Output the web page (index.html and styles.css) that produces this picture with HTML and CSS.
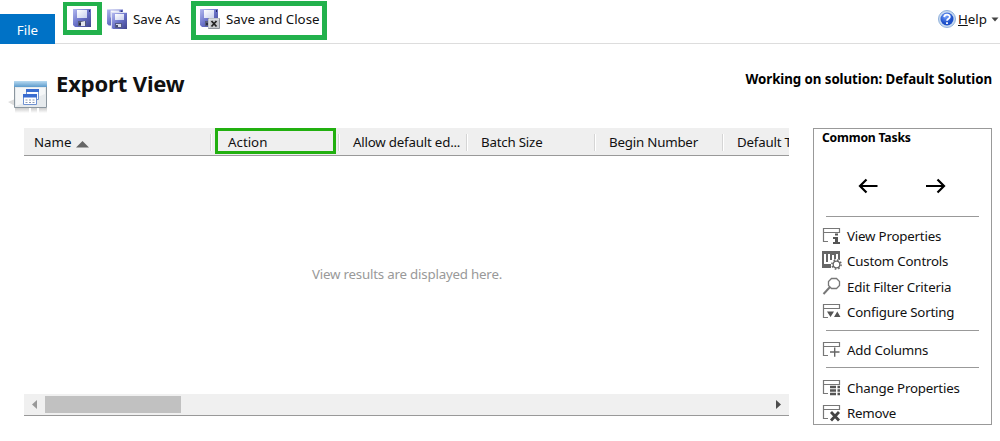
FILE: index.html
```html
<!DOCTYPE html>
<html lang="en">
<head>
<meta charset="utf-8">
<title>Export View</title>
<link rel="stylesheet" href="styles.css">
</head>
<body>
<svg class="defs" width="0" height="0">
  <defs>
    <linearGradient id="disk" x1="0" y1="0" x2="1" y2="1"><stop offset="0" stop-color="#b4baf0"/><stop offset=".5" stop-color="#6a72c8"/><stop offset="1" stop-color="#40448e"/></linearGradient>
    <linearGradient id="label" x1="0" y1="0" x2="1" y2="1"><stop offset="0" stop-color="#fff"/><stop offset="1" stop-color="#c9d0ee"/></linearGradient>
    <linearGradient id="bar" x1="0" y1="0" x2="0" y2="1"><stop offset="0" stop-color="#b9daf1"/><stop offset="1" stop-color="#5d9bcc"/></linearGradient>
    <radialGradient id="ball" cx=".4" cy=".3"><stop offset="0" stop-color="#78a5ff"/><stop offset="1" stop-color="#1d4fc9"/></radialGradient>
    <linearGradient id="fade" x1="0" y1="0" x2="0" y2="1"><stop offset="0" stop-color="#aaa"/><stop offset="1" stop-color="#fff"/></linearGradient>
    <symbol id="floppy" viewBox="0 0 18 18"><path d="M0 0H18V18H2L0 16Z" fill="url(#disk)"/><path d="M4 1H14V9H4Z" fill="url(#label)"/><path d="M5 12H13V17H5Z" fill="#555b78"/><path d="M8 13L12 12V17H8Z" fill="#e3e5ee"/><path d="M6 14H8V16H6Z" fill="#2b2e45"/><path d="M16 1H17V3H16Z" fill="#242967"/></symbol>
    <symbol id="pane" viewBox="0 0 20 20"><path d="M1.500 2.500H17.500V6.500H1.500ZM1.500 6.500V15.500H6" fill="none" stroke="#777" stroke-width="1.200"/></symbol>
  </defs>
</svg>
<header class="ribbon">
  <div class="file-tab"><span>File</span></div>
  <div class="tools">
    <div class="save marked"><svg width="18" height="18"><use href="#floppy"/></svg></div>
    <div class="save-as">
      <svg width="20" height="20" viewBox="0 0 20 20"><use href="#floppy" width="16" height="17"/><path d="M4 3H20V20H4Z" fill="#dfe2f5"/><path d="M5 4H20V20H6L5 19Z" fill="url(#disk)"/><path d="M8 5H17V11H8Z" fill="url(#label)"/><path d="M8 14H15V19H8Z" fill="#555b86"/><path d="M9 15H14V18H9Z" fill="#d9dcec"/><path d="M9 16H11V18H9Z" fill="#444a75"/></svg>
      <span>Save As</span>
    </div>
    <div class="save-close marked">
      <svg width="20" height="20" viewBox="0 0 20 20"><use href="#floppy" width="18" height="18"/><path d="M8.500 9.500H19.500V19.500H8.500Z" fill="#c5c8cd" stroke="#8e939b"/><path d="M9 19V10H19" fill="none" stroke="#eceef0"/><path d="M11.500 12L16.500 17.500M16.500 12L11.500 17.500" stroke="#222" stroke-width="1.800"/></svg>
      <span>Save and Close</span>
    </div>
  </div>
  <div class="help">
    <svg width="18" height="18" viewBox="0 0 18 18"><circle cx="9" cy="9" r="8.500" fill="#c8daf0" stroke="#8fb0dc"/><circle cx="9" cy="9" r="6.500" fill="url(#ball)"/><path d="M6.200 7.100C6.300 3.700 11.900 3.900 11.800 7C11.700 8.800 9 8.800 9 10.800M9 12.200V14" fill="none" stroke="#fff" stroke-width="1.800"/></svg>
    <span class="t-help"><u>H</u>elp</span>
    <svg class="caret" width="8" height="5" viewBox="0 0 8 5"><path d="M.5 .5H7.500L4 4.500Z" fill="#444"/></svg>
  </div>
</header>
<section class="title-row">
  <svg class="view-icon" width="40" height="36" viewBox="0 0 40 36">
    <path d="M0 22L7 19V26Z" fill="#ddd"/><path d="M7 28H39V33H7Z" fill="url(#fade)" opacity=".6"/>
    <path d="M6.500 2.500H38.500V27.500H6.500Z" fill="#e6eaed" stroke="#8b969f"/><path d="M6 1H39V7H6Z" fill="url(#bar)"/><path d="M8 8H37V14L8 26Z" fill="#fff" opacity=".6"/>
    <path d="M18.500 9.500H30.500V19.500H18.500Z" fill="#f9faff" stroke="#6e91d1"/><path d="M18 9H31V12H18Z" fill="#386bd0"/>
    <path d="M15.500 14.500H28.500V24.500H15.500Z" fill="#fff" stroke="#6e91d1"/><path d="M15 14H29V17.500H15Z" fill="#386bd0"/><path d="M17.500 20H26.500M17.500 22.500H26.500" stroke="#8b99b4" stroke-dasharray="2 1.500"/><path d="M22 28V33M30 28V33" stroke="#fff" stroke-width="2"/>
  </svg>
  <h1><span>Export View</span></h1>
  <div class="solution"><span>Working on solution: Default Solution</span></div>
</section>
<main class="content">
  <section class="grid">
    <div class="grid-head">
      <div class="col name"><span>Name</span><svg width="13" height="7" viewBox="0 0 13 7"><path d="M0 6.500L6.500 0L13 6.500Z" fill="#666"/></svg></div>
      <div class="col action"><div><span>Action</span></div></div>
      <div class="col tight"><span>Allow default ed...</span></div>
      <div class="col tight"><span>Batch Size</span></div>
      <div class="col tight"><span>Begin Number</span></div>
      <div class="col tight last"><span>Default T</span></div>
    </div>
    <div class="empty tight"><span>View results are displayed here.</span></div>
    <div class="scrollbar">
      <svg width="5" height="9" viewBox="0 0 5 9"><path d="M5 0V9L0 4.500Z" fill="#999"/></svg>
      <div class="thumb"></div>
      <svg width="5" height="9" viewBox="0 0 5 9"><path d="M0 0V9L5 4.500Z" fill="#4d4d4d"/></svg>
    </div>
  </section>
  <aside class="tasks tight">
    <h2><span>Common Tasks</span></h2>
    <div class="arrows">
      <svg width="22" height="16" viewBox="0 0 22 16"><path d="M20.500 8H3M9.500 1.500L3 8L9.500 14.500" fill="none" stroke="#000" stroke-width="2.200"/></svg>
      <svg width="22" height="16" viewBox="0 0 22 16"><path d="M1 8H19M12.500 1.500L19 8L12.500 14.500" fill="none" stroke="#000" stroke-width="2.200"/></svg>
    </div>
    <ul class="group first">
      <li><svg width="20" height="20"><use href="#pane"/><path d="M9 10H12V7H17V19H9Z" fill="#fff"/><path d="M13 7.500H16V9.500H13ZM11 11H16V16H18V18H11V16H13V13H11Z" fill="#555"/></svg><span>View Properties</span></li>
      <li><svg width="20" height="20"><path d="M0 0H18V9H16V3H14V9H12V4H10V9H8V3H6V11H4V3H2V15H9V17H0Z" fill="#666"/><path d="M0 13H9V17H0Z" fill="#666"/><circle cx="14.500" cy="13.500" r="5.500" fill="#fff"/><circle cx="14.500" cy="13.500" r="3.300" fill="#fff" stroke="#666" stroke-width="1.300"/><circle cx="14.500" cy="13.500" r="4.600" fill="none" stroke="#666" stroke-width="1.500" stroke-dasharray="1.600 2.013"/></svg><span>Custom Controls</span></li>
      <li><svg width="20" height="20"><path d="M9.500 1.500H14.500L17.500 4.500V8.500L14.500 11.500H9.500L6.500 8.500V4.500Z" fill="none" stroke="#777" stroke-width="1.300"/><path d="M8 10L1.500 17" stroke="#777" stroke-width="2"/></svg><span>Edit Filter Criteria</span></li>
      <li><svg width="20" height="20"><use href="#pane"/><path d="M5 9.500H12L8.500 15ZM12 15H18.500L15.300 9.500Z" fill="#555"/></svg><span>Configure Sorting</span></li>
    </ul>
    <ul class="group add">
      <li><svg width="20" height="20"><use href="#pane"/><path d="M7.500 12H18.500M12.500 7.500V17" stroke="#fff" stroke-width="3"/><path d="M8 12H17.500M12.700 7.500V16.700" stroke="#666" stroke-width="1.400"/></svg><span>Add Columns</span></li>
    </ul>
    <ul class="group change">
      <li><svg width="20" height="20"><use href="#pane"/><path d="M8 9H14M8 12.500H14M8 16H14" stroke="#555" stroke-width="2.500"/><path d="M15.500 9H18M15.500 12.500H18M15.500 16H18" stroke="#555" stroke-width="2.500"/></svg><span>Change Properties</span></li>
      <li><svg width="20" height="20"><use href="#pane"/><path d="M8 8H18V18H8Z" fill="#fff"/><path d="M9 9L17 17.500M17 9L9 17.500" stroke="#444" stroke-width="2.800"/></svg><span>Remove</span></li>
    </ul>
  </aside>
</main>
</body>
</html>
```
FILE: styles.css
```css
* { box-sizing: border-box; }
body { margin: 0; width: 1000px; height: 441px; overflow: hidden; background: #fff; color: #111; font: 13.3px/18px "Noto Sans", "Open Sans", sans-serif; display: flex; flex-direction: column; }
h1, h2, ul { margin: 0; padding: 0; list-style: none; }
svg { flex: none; display: block; }
.defs { position: absolute; }
span { white-space: nowrap; display: block; }
.tight { letter-spacing: -0.2px; }
.ribbon { height: 44px; display: flex; }
.file-tab { width: 55px; margin-top: 14px; background: #0072c6; color: #fff; display: flex; align-items: center; justify-content: center; padding-top: 2px; }
.tools { flex: 1; display: flex; align-items: flex-start; border-bottom: 1px solid #ddd; }
.marked { border: 5px solid #22b14c; }
.save { width: 39px; height: 33px; margin: 2px 0 0 8px; padding: 3px 6px; border-width: 4px 5px 5px 4px; }
.save-as { display: flex; gap: 6px; align-items: center; width: 84px; margin: 9px 0 0 5px; }
.save-close { width: 136px; height: 39px; display: flex; align-items: flex-start; gap: 6px; margin-top: 1px; padding: 3px 0 0 4px; }
.save-close span { margin-top: 1px; }
.help { display: flex; align-items: flex-start; width: 62px; padding-top: 10px; border-bottom: 1px solid #ddd; }
.help .t-help { width: 30px; margin: 0 0 0 2px; }
.help .caret { margin: 7px 0 0 3px; }
.title-row { height: 84px; display: flex; padding: 0 8px 0 8px; }
.view-icon { margin-top: 36px; }
h1 { flex: 1; margin: 25px 0 0 8px; font-size: 22px; line-height: 28px; letter-spacing: -0.15px; }
.solution { margin-top: 26px; font-weight: 700; letter-spacing: -0.07px; color: #000; }
.content { display: flex; align-items: flex-start; padding-left: 24px; gap: 24px; }
.grid { width: 765px; height: 288px; display: flex; flex-direction: column; }
.grid-head { height: 28px; display: flex; background: #efefef; border-bottom: 1px solid #999; overflow: hidden; }
.col { width: 128px; flex: none; padding: 5px 0 0 13px; background: linear-gradient(90deg, #d5d5d5 1px, #fff 1px, #fff 2px, transparent 2px) 126px 6px / 2px 17px no-repeat; }
.name { width: 188px; display: flex; padding-left: 10px; gap: 4px; background-position: 186px 6px; }
.name svg { margin-top: 8px; }
.action { padding: 0 0 0 3px; }
.action div { width: 121px; height: 26px; border: 3px solid #22b010; padding: 2px 10px; }
.col.last { width: 65px; background: none; }
.empty { flex: 1; display: flex; justify-content: center; align-items: center; color: #999; padding: 0 0 2px 1px; }
.scrollbar { height: 22px; background: #f0f0f0; border-bottom: 1px solid #999; display: flex; align-items: center; padding: 0 8px; gap: 8px; }
.thumb { width: 136px; height: 17px; background: #c1c1c1; margin-right: auto; }
.tasks { width: 179px; height: 297px; border: 1px solid #999; display: flex; flex-direction: column; }
h2 { flex: none; height: 49px; padding-left: 8px; font-size: 12.2px; line-height: 17px; color: #000; }
.arrows { flex: none; height: 38px; display: flex; gap: 46px; padding: 0 0 0 43px; }
.group { flex: none; border-top: 1px solid #999; margin: 0 12px; }
.group li { height: 25.500px; display: flex; align-items: center; gap: 5px; margin-left: -4px; }
.first { height: 114px; padding-top: 6px; }
.add { height: 37px; padding-top: 6px; }
.change { padding-top: 7px; }
```
